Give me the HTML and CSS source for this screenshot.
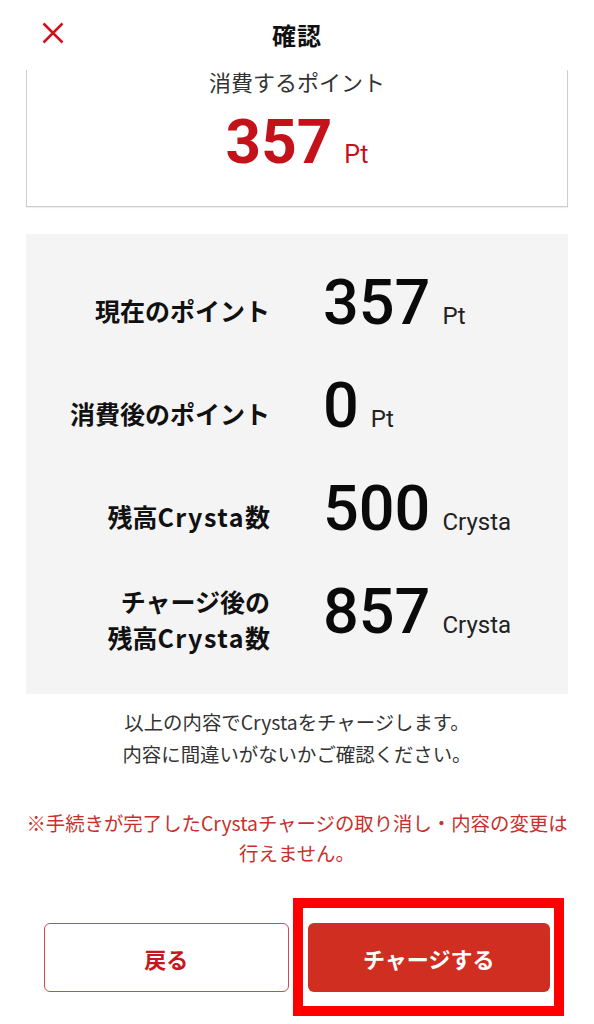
FILE: index.html
```html
<!DOCTYPE html>
<html lang="ja">
<head>
<meta charset="utf-8">
<title>確認</title>
<link rel="stylesheet" href="styles.css">
</head>
<body>
<header class="header">
  <button class="close" aria-label="閉じる">
    <svg viewBox="0 0 22 22" width="22" height="22"><path d="M1.5 1.5 L20.5 20.5 M20.5 1.5 L1.5 20.5" stroke="#d0121b" stroke-width="2.5" fill="none"/></svg>
  </button>
  <h1 class="title">確認</h1>
</header>
<main class="main">
  <section class="use-card">
    <p class="use-label">消費するポイント</p>
    <p class="use-value"><span class="use-num">357</span><span class="use-unit">Pt</span></p>
  </section>
  <section class="summary">
    <div class="row">
      <div class="label">現在のポイント</div>
      <div class="value"><span class="num">357</span><span class="unit">Pt</span></div>
    </div>
    <div class="row">
      <div class="label">消費後のポイント</div>
      <div class="value"><span class="num">0</span><span class="unit">Pt</span></div>
    </div>
    <div class="row">
      <div class="label">残高<span class="latin">Crysta</span>数</div>
      <div class="value"><span class="num">500</span><span class="unit">Crysta</span></div>
    </div>
    <div class="row">
      <div class="label">チャージ後の<br>残高<span class="latin">Crysta</span>数</div>
      <div class="value"><span class="num">857</span><span class="unit">Crysta</span></div>
    </div>
  </section>
  <p class="message">以上の内容でCrystaをチャージします。<br>内容に間違いがないかご確認ください。</p>
  <p class="notice">※手続きが完了したCrystaチャージの取り消し・内容の変更は<br>行えません。</p>
  <div class="actions">
    <button class="btn btn-back">戻る</button>
    <div class="primary-wrap">
      <button class="btn btn-charge">チャージする</button>
      <span class="highlight"></span>
    </div>
  </div>
</main>
</body>
</html>
```
FILE: styles.css
```css
* { box-sizing: border-box; }
html, body { margin: 0; padding: 0; background: #fff; }
body {
  font-family: "Noto Sans CJK JP", "Noto Sans", sans-serif;
  color: #111;
  width: 594px;
  min-height: 1024px;
}
p { margin: 0; }

.header {
  height: 70px;
  display: flex;
  align-items: center;
  justify-content: center;
  position: relative;
}
.close {
  position: absolute;
  left: 42px;
  top: 22px;
  width: 22px;
  height: 22px;
  padding: 0;
  border: 0;
  background: none;
  display: block;
}
.close svg { display: block; }
.title {
  margin: 0;
  font-size: 24px;
  font-weight: 700;
  line-height: 1;
  color: #111;
  letter-spacing: 1px;
}

.main { padding: 0 26px 40px; }

.use-card {
  height: 137px;
  border: 1px solid #cdcdcd;
  border-top: 0;
  box-shadow: 0 1px 1px rgba(0,0,0,0.06);
  text-align: center;
}
.use-label {
  font-size: 22px;
  line-height: 22px;
  color: #333;
}
.use-value {
  margin-top: 20px;
  display: flex;
  justify-content: center;
  align-items: baseline;
  gap: 12px;
  color: #c4121b;
  font-family: Roboto, "Liberation Sans", sans-serif;
  line-height: 60px;
}
.use-num { font-size: 62px; font-weight: 700; }
.use-unit { font-size: 25px; font-weight: 400; }

.summary {
  margin-top: 27px;
  background: #f4f4f4;
  padding: 24px 0;
  display: grid;
  grid-template-rows: repeat(4, 103px);
}
.row {
  display: grid;
  grid-template-columns: 244px 1fr;
  column-gap: 53px;
  align-items: center;
}
.label {
  text-align: right;
  font-size: 25px;
  font-weight: 700;
  line-height: 36px;
  color: #111;
}
.label .latin { letter-spacing: 1.5px; }
.value {
  display: flex;
  align-items: baseline;
  gap: 12px;
  font-family: Roboto, "Liberation Sans", sans-serif;
  color: #0a0a0a;
  line-height: 60px;
}
.num { font-size: 63px; font-weight: 500; }
.unit { font-size: 24px; font-weight: 400; color: #222; }

.message {
  margin-top: 12px;
  text-align: center;
  font-size: 19.4px;
  line-height: 32px;
  color: #333;
}
.notice {
  margin-top: 38px;
  text-align: center;
  font-size: 19.4px;
  line-height: 30px;
  color: #c9302c;
  white-space: nowrap;
}

.actions {
  margin: 55px 18px 0;
  display: flex;
  gap: 19px;
}
.btn {
  flex: 1;
  height: 69px;
  border-radius: 6px;
  font-family: "Noto Sans CJK JP", sans-serif;
  font-size: 22px;
  font-weight: 700;
  padding: 0;
}
.btn-back {
  background: #fff;
  border: 1.5px solid #cf4a4a;
  color: #c8161d;
}
.primary-wrap {
  flex: 1;
  display: flex;
  position: relative;
}
.btn-charge {
  background: #d12e22;
  border: 0;
  color: #fff;
}
.highlight {
  position: absolute;
  top: -25px;
  bottom: -24px;
  left: -15px;
  right: -14px;
  border: 10px solid #ff0000;
  pointer-events: none;
}
```
